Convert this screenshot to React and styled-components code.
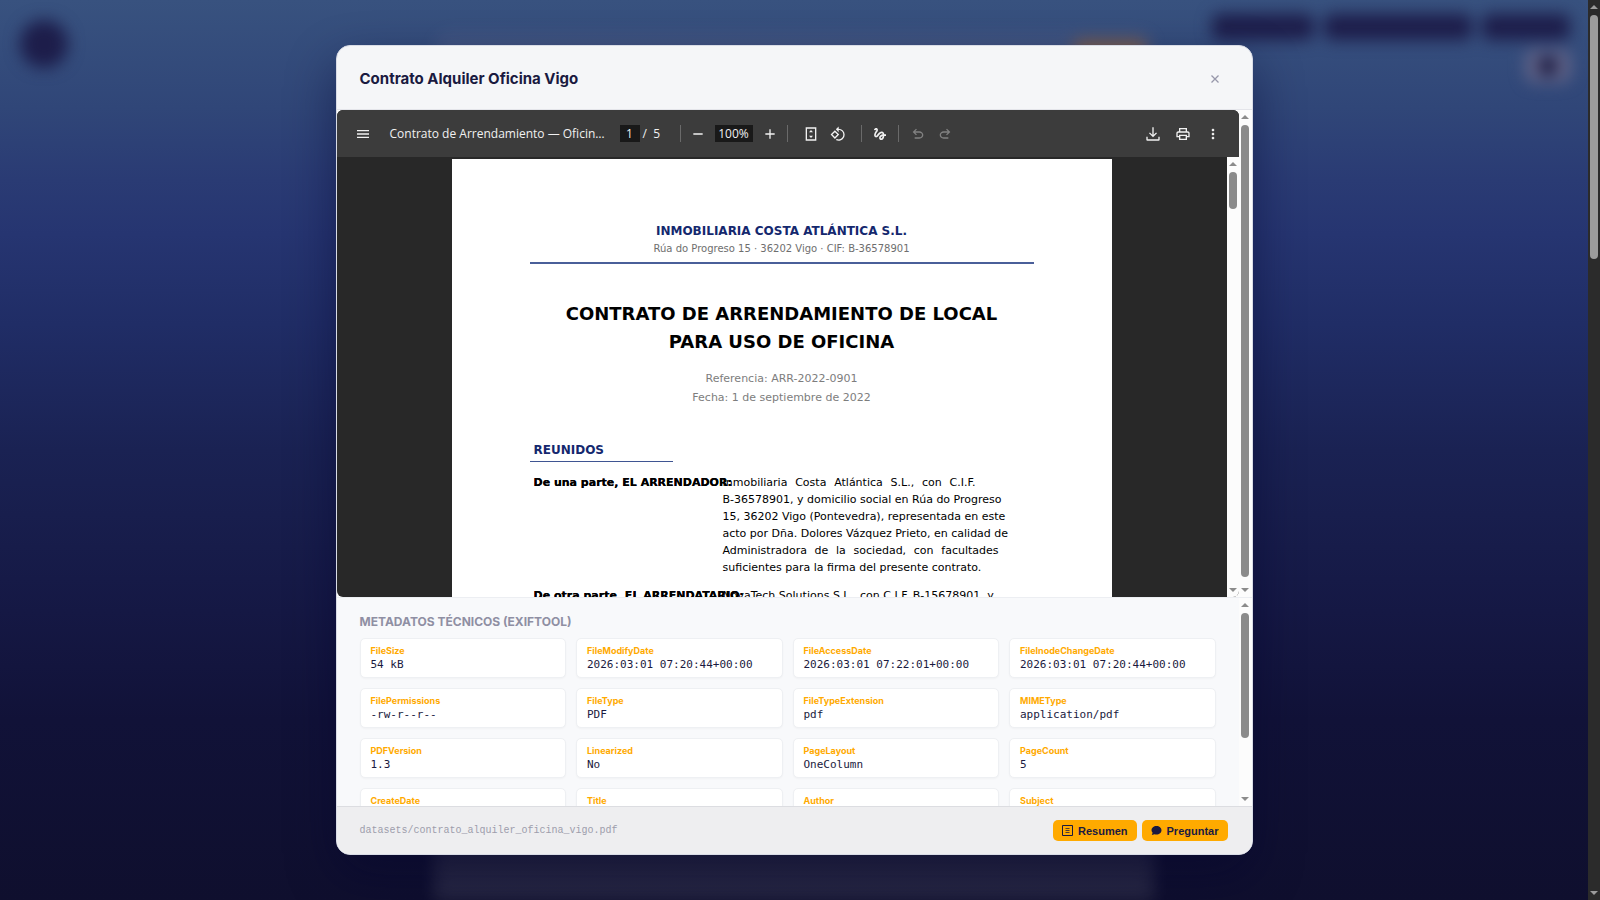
import styled, { createGlobalStyle, css } from 'styled-components';
import {
  MdAdd,
  MdGesture,
  MdMenu,
  MdMoreVert,
  MdOutlineRotate90DegreesCcw,
  MdRemove,
} from 'react-icons/md';

const GlobalStyle = createGlobalStyle`
  * {
    box-sizing: border-box;
  }
  body {
    margin: 0;
    font-family: Inter, 'Liberation Sans', sans-serif;
    color: #1a1a40;
    overflow: hidden;
  }
  button,
  input {
    font: inherit;
    color: inherit;
  }
`;

const Screen = styled.div`
  display: flex;
  height: 100vh;
  background: #0e0e2c;
`;

const Stage = styled.div`
  display: grid;
  flex: 1;
  min-width: 0;
  overflow: hidden;
  background: linear-gradient(
    #38527f 0%,
    #304678 12%,
    #2a3b74 20%,
    #263571 26%,
    #202d66 36%,
    #1a2253 50%,
    #151844 68%,
    #111238 80%,
    #0f0f2e 100%
  );
  > * {
    grid-area: 1 / 1;
    min-height: 0;
    min-width: 0;
  }
`;

/* page behind the dialog */
const Backdrop = styled.div`
  display: grid;
  grid-template-columns: 1fr 720px 1fr;
  height: 100vh;
  overflow: hidden;
  filter: blur(8px);
`;

const BackLeft = styled.div`
  padding: 20px;
`;

const Logo = styled.div`
  width: 48px;
  height: 48px;
  border-radius: 50%;
  background: #1d1d4a;
`;

const BackCard = styled.div`
  display: flex;
  justify-content: flex-end;
  align-items: flex-start;
  margin-top: 32px;
  margin-bottom: -30px;
  padding: 8px 8px;
  border-radius: 16px;
  background: linear-gradient(
    rgba(255, 200, 200, 0.06),
    rgba(255, 255, 235, 0.08) 90%,
    rgba(255, 255, 255, 0.13)
  );
`;

const BackAction = styled.div`
  width: 72px;
  height: 28px;
  border-radius: 6px;
  background: #7a5c4c;
`;

const BackRight = styled.div`
  display: flex;
  flex-direction: column;
  align-items: flex-end;
  gap: 10px;
  padding: 14px 18px;
`;

const BackNav = styled.div`
  display: flex;
  gap: 10px;
`;

const BackPill = styled.div`
  width: ${(p) => p.$width}px;
  height: 26px;
  border-radius: 8px;
  background: #1d1d4a;
`;

const BackFlag = styled.div`
  display: grid;
  place-items: center;
  width: 44px;
  height: 32px;
  border-radius: 8px;
  background: #66678a;
  &::after {
    content: '';
    width: 20px;
    height: 20px;
    border-radius: 50%;
    background: #14143c;
  }
`;

const Overlay = styled.div`
  display: flex;
  justify-content: center;
  align-items: center;
  height: 100vh;
  z-index: 1;
`;

const Modal = styled.section`
  display: flex;
  flex-direction: column;
  width: 917px;
  max-width: 94%;
  height: 90vh;
  border: 1px solid #d9dce6;
  border-radius: 14px;
  background: #f5f6f8;
  box-shadow: 0 20px 50px rgba(5, 5, 45, 0.45);
  overflow: hidden;
`;

const ModalHeader = styled.header`
  display: flex;
  justify-content: space-between;
  align-items: center;
  height: 64px;
  padding: 2px 28px 0 23px;
  border-bottom: 1px solid #e4e5ea;
  flex-shrink: 0;
`;

const Title = styled.h2`
  margin: 0;
  font-size: 15px;
  font-weight: 700;
  line-height: 20px;
`;

const CloseButton = styled.button`
  display: grid;
  place-items: center;
  width: 18px;
  height: 20px;
  padding: 0;
  border: 0;
  background: none;
  color: #9797aa;
`;

const Preview = styled.div`
  display: flex;
  flex: 1;
  min-height: 0;
  background: #fcfcfc;
`;

const Viewer = styled.div`
  display: flex;
  flex-direction: column;
  flex: 1;
  min-width: 0;
  border-radius: 6px;
  background: #282828;
  overflow: hidden;
`;

const Toolbar = styled.div`
  display: grid;
  grid-template-columns: 1fr auto;
  align-items: center;
  height: 47px;
  padding: 0 18px;
  background: #3c3c3c;
  color: #f1f1f1;
  font-family: 'Open Sans', 'Noto Sans', sans-serif;
  font-size: 12px;
  flex-shrink: 0;
`;

const ToolGroup = styled.div`
  display: flex;
  align-items: center;
  gap: ${(p) => p.$gap || 0}px;
`;

const DocName = styled.span`
  width: 210px;
  margin: 0 20px 0 19px;
  white-space: nowrap;
`;

const IconButton = styled.button`
  display: grid;
  place-items: center;
  width: 16px;
  height: 24px;
  padding: 0;
  border: 0;
  background: none;
  opacity: ${(p) => (p.disabled ? 0.38 : 1)};
  svg {
    width: 16px;
    height: 16px;
  }
`;

const ToolInput = styled.input`
  width: ${(p) => p.$width}px;
  height: 17px;
  padding: 0;
  border: 0;
  background: #191919;
  text-align: center;
`;

const PageCount = styled.span`
  width: 20px;
  margin-left: 3px;
  white-space: pre;
`;

const Divider = styled.span`
  width: 1px;
  height: 17px;
  margin: 0 ${(p) => p.$after}px 0 ${(p) => p.$before}px;
  background: #6a6a6a;
`;

const ViewerBody = styled.div`
  display: flex;
  flex: 1;
  min-height: 0;
`;

const Canvas = styled.div`
  display: flex;
  justify-content: center;
  flex: 1;
  padding-top: 2px;
  overflow: hidden;
`;

const Sheet = styled.article`
  width: 660px;
  height: 935px;
  padding: 62px 78px 0;
  flex-shrink: 0;
  background: #fff;
  color: #000;
  font-family: 'DejaVu Sans', sans-serif;
  font-size: 11px;
  line-height: 17px;
`;

const Letterhead = styled.header`
  border-bottom: 2px solid #4a5f99;
  text-align: center;
`;

const Company = styled.div`
  color: #14286e;
  font-size: 12px;
  font-weight: 700;
  line-height: 20px;
`;

const Address = styled.div`
  padding-bottom: 5px;
  color: #6e6e6e;
  font-size: 10px;
  line-height: 16px;
`;

const SheetTitle = styled.h1`
  margin: 36px 0 13px;
  font-size: 18px;
  line-height: 28px;
  text-align: center;
`;

const Reference = styled.p`
  margin: 0;
  color: #7d7d7d;
  font-size: 11px;
  line-height: 19px;
  text-align: center;
`;

const SectionTitle = styled.h2`
  width: 143px;
  margin: 33px 0 12px;
  padding: 0 4px 1px;
  border-bottom: 1px solid #3f5592;
  color: #14286e;
  font-size: 12px;
  line-height: 20px;
`;

const Party = styled.div`
  display: grid;
  grid-template-columns: 189px 1fr;
  margin-bottom: 11px;
  padding-left: 4px;
`;

const PartyLabel = styled.strong`
  white-space: nowrap;
  text-shadow: 0 0 #000;
`;

const Line = styled.div`
  white-space: nowrap;
  ${(p) =>
    p.$justify &&
    css`
      width: ${p.$justify}px;
      white-space: normal;
      text-align-last: justify;
    `}
`;

const Bar = styled.div`
  display: flex;
  flex-direction: column;
  align-items: center;
  justify-content: space-between;
  width: ${(p) => p.$width || 12}px;
  padding: 5px 0;
  background: ${(p) => p.$track || '#fcfcfc'};
  color: ${(p) => p.$thumb || '#8b8b8b'};
  flex-shrink: 0;
`;

const Arrow = styled.span`
  border: 4px solid transparent;
  border-top-width: ${(p) => (p.$down ? '4px' : '0')};
  border-bottom-width: ${(p) => (p.$down ? '0' : '4px')};
  border-${(p) => (p.$down ? 'top' : 'bottom')}-color: currentColor;
`;

const Track = styled.div`
  flex: 1;
  width: 8px;
  margin: 6px 0;
`;

const Thumb = styled.div`
  height: ${(p) => p.$size}%;
  border-radius: 4px;
  background: currentColor;
`;

const Metadata = styled.section`
  display: flex;
  height: 209px;
  border-top: 1px solid #eceef2;
  background: #f8f9fb;
  flex-shrink: 0;
`;

const MetaBody = styled.div`
  flex: 1;
  padding: 16px 23px 0;
  overflow: hidden;
`;

const MetaHeading = styled.h3`
  margin: 0 0 9px;
  color: #8f8fa3;
  font-size: 12px;
  font-weight: 700;
  line-height: 15px;
  text-transform: uppercase;
`;

const MetaGrid = styled.dl`
  display: grid;
  grid-template-columns: repeat(4, 1fr);
  gap: 10px;
  margin: 0;
`;

const MetaCard = styled.div`
  height: 40px;
  padding: 6px 10px;
  border: 1px solid #eef0f3;
  border-radius: 5px;
  background: #fff;
  box-shadow: 0 1px 2px rgba(0, 0, 0, 0.03);
`;

const MetaKey = styled.dt`
  color: #ffaa00;
  font-size: 9px;
  font-weight: 700;
  line-height: 12px;
`;

const MetaValue = styled.dd`
  margin: 0;
  font-family: 'DejaVu Sans Mono', monospace;
  font-size: 11px;
  line-height: 15px;
  white-space: nowrap;
`;

const ModalFooter = styled.footer`
  display: flex;
  justify-content: space-between;
  align-items: center;
  height: 48px;
  padding: 0 24px 0 23px;
  border-top: 1px solid #dcdde1;
  background: #eeeef0;
  flex-shrink: 0;
`;

const FilePath = styled.span`
  color: #9d9dac;
  font-family: 'Liberation Mono', monospace;
  font-size: 10px;
`;

const Actions = styled.div`
  display: flex;
  gap: 5px;
`;

const ActionButton = styled.button`
  display: flex;
  align-items: center;
  gap: 5px;
  height: 21px;
  padding: 0 9px;
  border: 0;
  border-radius: 5px;
  background: #ffaa00;
  font-family: 'Liberation Sans', sans-serif;
  font-size: 11px;
  font-weight: 700;
`;

const meta = [
  ['FileSize', '54 kB'],
  ['FileModifyDate', '2026:03:01 07:20:44+00:00'],
  ['FileAccessDate', '2026:03:01 07:22:01+00:00'],
  ['FileInodeChangeDate', '2026:03:01 07:20:44+00:00'],
  ['FilePermissions', '-rw-r--r--'],
  ['FileType', 'PDF'],
  ['FileTypeExtension', 'pdf'],
  ['MIMEType', 'application/pdf'],
  ['PDFVersion', '1.3'],
  ['Linearized', 'No'],
  ['PageLayout', 'OneColumn'],
  ['PageCount', '5'],
  ['CreateDate', ''],
  ['Title', ''],
  ['Author', ''],
  ['Subject', ''],
];

const landlord = [
  { text: 'Inmobiliaria Costa Atlántica S.L., con C.I.F.', justify: 253 },
  { text: 'B-36578901, y domicilio social en Rúa do Progreso' },
  { text: '15, 36202 Vigo (Pontevedra), representada en este' },
  { text: 'acto por Dña. Dolores Vázquez Prieto, en calidad de' },
  { text: 'Administradora de la sociedad, con facultades', justify: 276 },
  { text: 'suficientes para la firma del presente contrato.' },
];

const Icon = ({ d }) => (
  <svg viewBox='0 0 24 24' fill='currentColor'>
    <path d={d} />
  </svg>
);

const UNDO =
  'M7 19v-2h7.1q1.6 0 2.7-1T18 13.5 16.8 11 14.1 10H7.8l2.6 2.6L9 14 4 9l5-5 1.4 1.4L7.8 8h6.3q2.4 0 4.2 1.6T20 13.5t-1.7 3.9T14.1 19z';
const REDO =
  'M17 19v-2H9.9q-1.6 0-2.7-1T6 13.5 7.2 11 9.9 10h6.3l-2.6 2.6L15 14l5-5-5-5-1.4 1.4L16.2 8H9.9Q7.5 8 5.7 9.6T4 13.5t1.7 3.9T9.9 19z';
const FIT = 'M4 2h16v20H4zM6 4v16h12V4zM12 6l3 3.5H9zM12 18l-3-3.5h6z';
const DOWNLOAD =
  'M11 2h2v11.2l3.6-3.6L18 11l-6 6-6-6 1.4-1.4 3.6 3.6zM2 16h2v4h16v-4h2v4.5q0 1.500-1.500 1.500h-17Q2 22 2 20.500z';
const PRINT =
  'M19 8h-1V3H6v5H5c-1.7 0-3 1.3-3 3v6h4v4h12v-4h4v-6c0-1.7-1.3-3-3-3zM8 5h8v3H8zm8 14H8v-4h8zm2-4v-2H6v2H4v-4c0-.6.4-1 1-1h14c.6 0 1 .4 1 1v4z';

const ScrollBar = ({ size, ...rest }) => (
  <Bar {...rest} aria-hidden='true'>
    <Arrow />
    <Track>
      <Thumb $size={size} />
    </Track>
    <Arrow $down />
  </Bar>
);

const PdfToolbar = () => (
  <Toolbar>
    <ToolGroup>
      <IconButton aria-label='Menú'>
        <MdMenu />
      </IconButton>
      <DocName>Contrato de Arrendamiento — Oficin…</DocName>
      <ToolInput $width={20} defaultValue='1' aria-label='Página' />
      <PageCount>{'/  5'}</PageCount>
      <Divider $before={17} $after={9} />
      <ToolGroup $gap={9}>
        <IconButton aria-label='Reducir'>
          <MdRemove />
        </IconButton>
        <ToolInput $width={38} defaultValue='100%' aria-label='Zoom' />
        <IconButton aria-label='Ampliar'>
          <MdAdd />
        </IconButton>
      </ToolGroup>
      <Divider $before={9} $after={15} />
      <ToolGroup $gap={11}>
        <IconButton aria-label='Ajustar a la página'>
          <Icon d={FIT} />
        </IconButton>
        <IconButton aria-label='Girar'>
          <MdOutlineRotate90DegreesCcw />
        </IconButton>
      </ToolGroup>
      <Divider $before={15} $after={10} />
      <IconButton aria-label='Dibujar'>
        <MdGesture />
      </IconButton>
      <Divider $before={10} $after={11} />
      <ToolGroup $gap={11}>
        <IconButton disabled aria-label='Deshacer'>
          <Icon d={UNDO} />
        </IconButton>
        <IconButton disabled aria-label='Rehacer'>
          <Icon d={REDO} />
        </IconButton>
      </ToolGroup>
    </ToolGroup>
    <ToolGroup $gap={14}>
      <IconButton aria-label='Descargar'>
        <Icon d={DOWNLOAD} />
      </IconButton>
      <IconButton aria-label='Imprimir'>
        <Icon d={PRINT} />
      </IconButton>
      <IconButton aria-label='Más acciones'>
        <MdMoreVert />
      </IconButton>
    </ToolGroup>
  </Toolbar>
);

const PdfPage = () => (
  <Sheet>
    <Letterhead>
      <Company>INMOBILIARIA COSTA ATLÁNTICA S.L.</Company>
      <Address>Rúa do Progreso 15 · 36202 Vigo · CIF: B-36578901</Address>
    </Letterhead>
    <SheetTitle>
      CONTRATO DE ARRENDAMIENTO DE LOCAL
      <br />
      PARA USO DE OFICINA
    </SheetTitle>
    <Reference>Referencia: ARR-2022-0901</Reference>
    <Reference>Fecha: 1 de septiembre de 2022</Reference>
    <SectionTitle>REUNIDOS</SectionTitle>
    <Party>
      <PartyLabel>De una parte, EL ARRENDADOR:</PartyLabel>
      <div>
        {landlord.map((line) => (
          <Line key={line.text} $justify={line.justify}>
            {line.text}
          </Line>
        ))}
      </div>
    </Party>
    <Party>
      <PartyLabel>De otra parte, EL ARRENDATARIO:</PartyLabel>
      <Line>NovaTech Solutions S.L., con C.I.F. B-15678901, y</Line>
    </Party>
  </Sheet>
);

const App = () => {
  return (
    <Screen>
      <GlobalStyle />
      <Stage>
        <Backdrop aria-hidden='true'>
          <BackLeft>
            <Logo />
          </BackLeft>
          <BackCard>
            <BackAction />
          </BackCard>
          <BackRight>
            <BackNav>
              <BackPill $width={102} />
              <BackPill $width={148} />
              <BackPill $width={88} />
            </BackNav>
            <BackFlag />
          </BackRight>
        </Backdrop>
        <Overlay>
          <Modal role='dialog' aria-labelledby='modal-title'>
            <ModalHeader>
              <Title id='modal-title'>Contrato Alquiler Oficina Vigo</Title>
              <CloseButton aria-label='Cerrar'>
                <svg width='8' height='8' viewBox='0 0 8 8'>
                  <path
                    d='M0.5 0.5l7 7M7.5 0.5l-7 7'
                    stroke='currentColor'
                    strokeWidth='1.3'
                  />
                </svg>
              </CloseButton>
            </ModalHeader>
            <Preview>
              <Viewer>
                <PdfToolbar />
                <ViewerBody>
                  <Canvas>
                    <PdfPage />
                  </Canvas>
                  <ScrollBar size={9} />
                </ViewerBody>
              </Viewer>
              <ScrollBar size={99} $width={13} />
            </Preview>
            <Metadata>
              <MetaBody>
                <MetaHeading>Metadatos técnicos (ExifTool)</MetaHeading>
                <MetaGrid>
                  {meta.map(([name, value]) => (
                    <MetaCard key={name}>
                      <MetaKey>{name}</MetaKey>
                      <MetaValue>{value}</MetaValue>
                    </MetaCard>
                  ))}
                </MetaGrid>
              </MetaBody>
              <ScrollBar size={70} $width={13} />
            </Metadata>
            <ModalFooter>
              <FilePath>datasets/contrato_alquiler_oficina_vigo.pdf</FilePath>
              <Actions>
                <ActionButton>
                  <svg
                    width='11'
                    height='11'
                    viewBox='0 0 11 11'
                    fill='none'
                    stroke='currentColor'
                  >
                    <path d='M0.5 0.5h10v10h-10z' />
                    <path
                      d='M3.5 3.5h4M3.5 5.5h4M3.5 7.5h4'
                      strokeOpacity='0.75'
                    />
                  </svg>
                  Resumen
                </ActionButton>
                <ActionButton>
                  <svg
                    width='11'
                    height='11'
                    viewBox='0 0 11 11'
                    fill='currentColor'
                  >
                    <path d='M5.5 1C8.3 1 10.5 2.9 10.5 5.3S8.3 9.6 5.5 9.6c-.7 0-1.3-.1-1.9-.3L.8 10l.8-2.200C.9 7.100.5 6.300.5 5.300.5 2.900 2.700 1 5.500 1z' />
                  </svg>
                  Preguntar
                </ActionButton>
              </Actions>
            </ModalFooter>
          </Modal>
        </Overlay>
      </Stage>
      <ScrollBar size={28} $track='#2b2b2b' $thumb='#9c9c9c' />
    </Screen>
  );
};

export default App;
